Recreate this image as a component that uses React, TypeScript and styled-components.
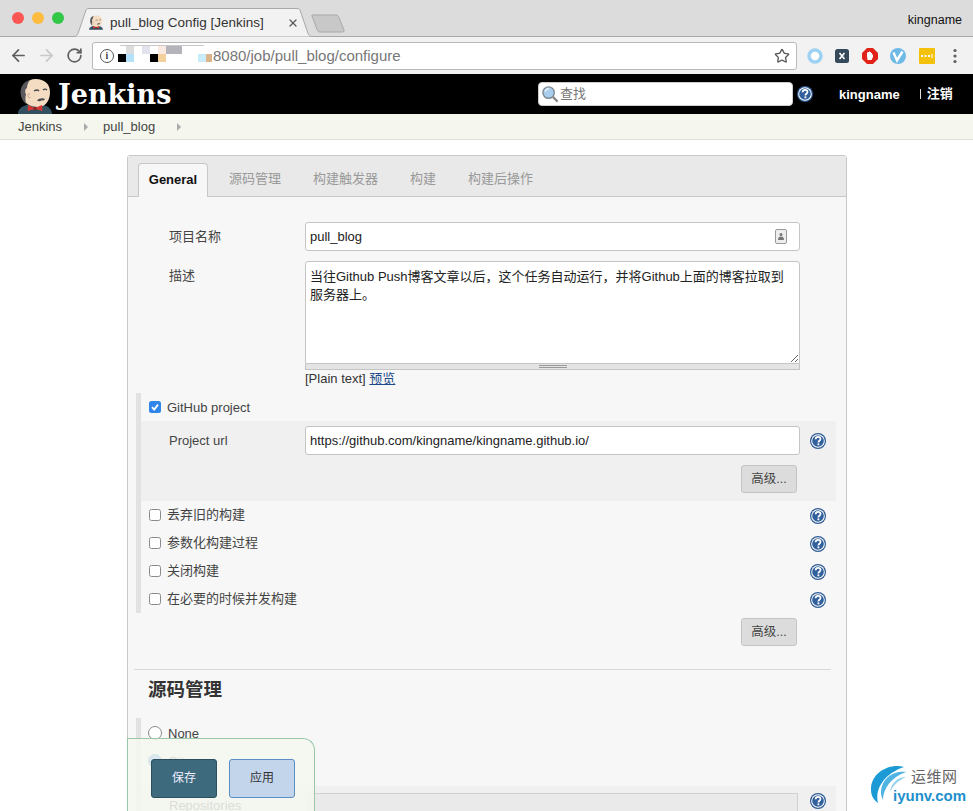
import React from "react";
import styled, { createGlobalStyle } from "styled-components";
import { ArrowLeft, ArrowRight, RotateCw, Star, X } from "lucide-react";

const FONT = `"Liberation Sans", "Noto Sans CJK SC", Arial, sans-serif`;

const GlobalStyle = createGlobalStyle`
  html, body {
    margin: 0;
    padding: 0;
    height: 100%;
    overflow: hidden;
    background: #fff;
  }
  * {
    box-sizing: border-box;
  }
`;

function JenkinsHead({ size }: { size: number }) {
  return (
    <svg width={size} height={size * (36 / 34)} viewBox="0 0 34 36">
      <path d="M0 36c0-5 4-8 10-9.500l7 2 7-2c6 1.500 10 4.500 10 9.500z" fill="#335061" />
      <path d="M4 19C2 9 8 1 18 1c8 0 14 5 14 13 0 9-5 15-12 15-8 0-14-4-16-10z" fill="#f3dcc2" />
      <path d="M8 26C3 22 1 14 4 8c1.500-3 4-5 8-6-2 3-3 5-3 8-2 1-2.500 4-1 6.500-1 3-.5 6 0 9.500z" fill="#5a585c" />
      <path d="M16 13c2-1.200 4-1.200 5 0M25 12c1-1 3-1 4 0" stroke="#49484b" strokeWidth="1.300" fill="none" />
      <path d="M19 22.500c2-2.500 6-3 8-1.500-1 1.500-2.500 2-3.500 1.200-1 1.300-3 1.300-4.500.3z" fill="#49484b" />
      <path d="M12 16c-1.500-1-2.500 0-2 2s1.500 2.500 2.500 1.500" stroke="#c9a888" strokeWidth="1" fill="none" />
      <path d="M10 27l7 3 7-3 .5 6-7.500-2-7.500 2z" fill="#d33833" />
      <circle cx="17" cy="30.500" r="1.500" fill="#8f1f1c" />
    </svg>
  );
}

function HelpIcon() {
  return (
    <svg width="16" height="16" viewBox="0 0 16 16">
      <circle cx="8" cy="8" r="8" fill="#2c5a94" />
      <circle cx="8" cy="8" r="6.800" fill="#fff" />
      <circle cx="8" cy="8" r="5.800" fill="#32609c" />
      <path
        d="M5.600 6.300C5.700 4.700 6.700 3.900 8.100 3.900c1.400 0 2.400.9 2.400 2.100 0 1.800-2.100 1.700-2.100 3.400"
        stroke="#fff"
        strokeWidth="1.700"
        fill="none"
      />
      <rect x="7.500" y="10.400" width="1.800" height="1.800" fill="#fff" />
    </svg>
  );
}

function UrlMosaic() {
  const blocks = [
    [4, 10, 8, 8, "#000"],
    [12, 10, 8, 8, "#b3e1f8"],
    [12, 2, 8, 8, "#dcdcdc"],
    [28, 2, 8, 8, "#e1e3ef"],
    [36, 10, 8, 8, "#000"],
    [44, 10, 8, 8, "#f3d09c"],
    [44, 2, 8, 8, "#faeae2"],
    [52, 2, 16, 8, "#b5b3ba"],
    [84, 10, 8, 8, "#c9ecfb"],
    [92, 10, 6, 8, "#dcb48c"],
  ] as const;
  return (
    <svg width="99" height="24" viewBox="0 0 99 24">
      <path d="M6 1h84v1H6z" fill="#c9c9c9" />
      {blocks.map(([x, y, w, h, c], i) => (
        <rect key={i} x={x} y={y} width={w} height={h} fill={c} />
      ))}
    </svg>
  );
}

function Extensions() {
  return (
    <ExtensionRow>
      <svg width="16" height="16" viewBox="0 0 16 16">
        <circle cx="8" cy="8" r="6" fill="#fff" stroke="#9fd2f2" strokeWidth="3.600" />
      </svg>
      <svg width="14" height="14" viewBox="0 0 14 14">
        <rect width="14" height="14" rx="2.500" fill="#34495a" />
        <path d="M4.500 4l5 6M9.500 4l-5 6" stroke="#fff" strokeWidth="1.600" />
      </svg>
      <svg width="16" height="16" viewBox="0 0 16 16">
        <path d="M5 0h6l5 5v6l-5 5H5l-5-5V5z" fill="#e2231a" />
        <path d="M5 8V4.500h1V4h1v-.5h1V4h1v1h1v2l1-1v3l-1.500 3h-4z" fill="#fff" />
      </svg>
      <svg width="16" height="16" viewBox="0 0 16 16">
        <circle cx="8" cy="8" r="8" fill="#6fb9e6" />
        <path d="M3.500 4.500l3.500 8 5.500-9" stroke="#fff" strokeWidth="2.400" fill="none" />
      </svg>
      <svg width="16" height="16" viewBox="0 0 16 16">
        <rect width="16" height="16" rx="1" fill="#f4c20d" />
        <path d="M2 8h2M5.500 8h2M9 8h2" stroke="#fff" strokeWidth="1.800" />
        <path d="M13 6v4" stroke="#fff" strokeWidth="1" />
      </svg>
      <svg width="16" height="16" viewBox="0 0 16 16">
        <circle cx="8" cy="2.500" r="1.600" fill="#5f5f5f" />
        <circle cx="8" cy="8" r="1.600" fill="#5f5f5f" />
        <circle cx="8" cy="13.500" r="1.600" fill="#5f5f5f" />
      </svg>
    </ExtensionRow>
  );
}

function Check({ checked, label }: { checked?: boolean; label: string }) {
  return (
    <CheckLabel>
      <CheckBox $checked={checked}>
        {checked && (
          <svg width="12" height="12" viewBox="0 0 12 12">
            <path d="M3 6.200l2.200 2.300L9 3.600" stroke="#fff" strokeWidth="1.800" fill="none" />
          </svg>
        )}
      </CheckBox>
      <CheckText $latin={checked}>{label}</CheckText>
    </CheckLabel>
  );
}

export default function App() {
  return (
    <Page>
      <GlobalStyle />
      <TabStrip>
        <Lights>
          <Light $color="#fc5753" />
          <Light $color="#fdbc40" />
          <Light $color="#33c748" />
        </Lights>
        <Tab>
          <TabShape width="242" height="29" viewBox="0 0 242 29">
            <path d="M0 28.500h2c2 0 3-1 4-3L14 2c.6-1 1.400-1.500 3-1.500h208c1.600 0 2.400.5 3 1.500l8 23.500c1 2 2 3 4 3h2" fill="#f2f2f2" stroke="#a8a8a8" />
          </TabShape>
          <TabIcon>
            <JenkinsHead size={14} />
          </TabIcon>
          <TabTitle>pull_blog Config [Jenkins]</TabTitle>
          <TabClose>
            <X size={12} strokeWidth={2.600} color="#5a5a5a" />
          </TabClose>
        </Tab>
        <NewTab width="34" height="19" viewBox="0 0 34 19">
          <path d="M1 1h24c1 0 2 .5 2.500 1.500L33 16c.4 1.500-.5 2-1.500 2H9c-1 0-2-.5-2.500-1.500L1 2c-.3-.6 0-1 0-1z" fill="#c8c8c8" stroke="#a8a8a8" />
        </NewTab>
        <ProfileName>kingname</ProfileName>
      </TabStrip>

      <Toolbar>
        <NavIcon>
          <ArrowLeft size={19} strokeWidth={2.200} color="#5f5f5f" />
        </NavIcon>
        <NavIcon>
          <ArrowRight size={19} strokeWidth={2.200} color="#c8c8c8" />
        </NavIcon>
        <NavIcon>
          <RotateCw size={17} strokeWidth={2.400} color="#5f5f5f" />
        </NavIcon>
        <Omnibox>
          <InfoBadge>i</InfoBadge>
          <UrlMosaic />
          <UrlText>8080/job/pull_blog/configure</UrlText>
          <StarSlot>
            <Star size={16} strokeWidth={2} color="#5a5a5a" />
          </StarSlot>
        </Omnibox>
        <Extensions />
      </Toolbar>

      <Header>
        <Brand>
          <JenkinsHead size={34} />
          <BrandName>Jenkins</BrandName>
        </Brand>
        <SearchBox>
          <svg width="19" height="19" viewBox="0 0 20 20">
            <circle cx="8" cy="8" r="6" fill="#a9cdec" stroke="#7c8a96" strokeWidth="1.500" />
            <path d="M4.500 7c.5-2 2-3 4-3" stroke="#e8f3fb" strokeWidth="1.500" fill="none" />
            <path d="M12.500 12.500l5 5" stroke="#8a8a8a" strokeWidth="2.500" />
          </svg>
          <SearchHint>查找</SearchHint>
        </SearchBox>
        <HeaderHelp>
          <HelpIcon />
        </HeaderHelp>
        <UserName>kingname</UserName>
        <Logout>注销</Logout>
      </Header>

      <Breadcrumbs>
        <Crumb>Jenkins</Crumb>
        <CrumbArrow />
        <Crumb>pull_blog</Crumb>
        <CrumbArrow />
      </Breadcrumbs>

      <Panel>
        <Tabs>
          <ActiveTab>General</ActiveTab>
          <ConfigTab>源码管理</ConfigTab>
          <ConfigTab>构建触发器</ConfigTab>
          <ConfigTab>构建</ConfigTab>
          <ConfigTab>构建后操作</ConfigTab>
        </Tabs>

        <NameRow>
          <CjkLabel>项目名称</CjkLabel>
          <InputWrap>
            <TextInput readOnly value="pull_blog" />
            <ContactBadge>
              <svg width="12" height="15" viewBox="0 0 12 15">
                <rect x=".5" y=".5" width="11" height="14" rx="1.500" fill="#eee" stroke="#999" />
                <circle cx="6" cy="5.500" r="1.500" fill="#777" />
                <path d="M3 11c0-2.500 1-3.500 3-3.500s3 1 3 3.500z" fill="#777" />
              </svg>
            </ContactBadge>
          </InputWrap>
        </NameRow>

        <DescRow>
          <DescLabel>描述</DescLabel>
          <div>
            <Description
              readOnly
              defaultValue="当往Github Push博客文章以后，这个任务自动运行，并将Github上面的博客拉取到服务器上。"
            />
            <Grippie>
              <GrippieLines />
            </Grippie>
            <PreviewLine>
              [Plain text] <PreviewLink href="#preview">预览</PreviewLink>
            </PreviewLine>
          </div>
        </DescRow>

        <OptionBlock>
          <OptionRow>
            <Check checked label="GitHub project" />
          </OptionRow>
          <NestedBlock>
            <UrlRow>
              <FieldLabel>Project url</FieldLabel>
              <TextInput readOnly value="https://github.com/kingname/kingname.github.io/" />
              <HelpSlot>
                <HelpIcon />
              </HelpSlot>
            </UrlRow>
            <ButtonRow>
              <AdvancedButton>高级...</AdvancedButton>
            </ButtonRow>
          </NestedBlock>
          {["丢弃旧的构建", "参数化构建过程", "关闭构建", "在必要的时候并发构建"].map((label) => (
            <OptionRow key={label}>
              <Check label={label} />
              <HelpSlot>
                <HelpIcon />
              </HelpSlot>
            </OptionRow>
          ))}
        </OptionBlock>

        <AdvancedRow>
          <AdvancedButton>高级...</AdvancedButton>
        </AdvancedRow>

        <Divider />
        <SectionTitle>源码管理</SectionTitle>

        <ScmBlock>
          <RadioRow>
            <Radio />
            None
          </RadioRow>
          <RadioRow>
            <Radio $selected />
            Git
          </RadioRow>
          <ScmNested>
            <RepoLabel>Repositories</RepoLabel>
            <RepoBox />
            <RepoHelp>
              <HelpIcon />
            </RepoHelp>
          </ScmNested>
        </ScmBlock>
      </Panel>

      <SaveBar>
        <SaveButton>保存</SaveButton>
        <ApplyButton>应用</ApplyButton>
      </SaveBar>

      <Watermark>
        <svg width="38" height="42" viewBox="0 0 38 42" fill="none">
          <path d="M34 3C20-1 2 8 1 24c-.4 7 2.500 12 7 15C5 28 11 11 34 3z" fill="#1c9ad6" />
          <path d="M36 8C24 6 12 14 11 27c-.3 3 .5 6 2 9 0-11 8-23 23-28z" fill="#4fb4e2" />
          <path d="M36 13c-8 0-15 6-16 15 3-7 9-12 16-15z" fill="#8fd0ee" />
        </svg>
        <WatermarkCn>运维网</WatermarkCn>
        <WatermarkEn>iyunv.com</WatermarkEn>
      </Watermark>
    </Page>
  );
}

const Page = styled.div`
  position: relative;
  width: 973px;
  height: 811px;
  overflow: hidden;
  font-family: ${FONT};
  font-size: 13px;
  color: #333;
  background: #fff;
`;

const TabStrip = styled.div`
  display: flex;
  align-items: flex-end;
  height: 37px;
  background: #dcdcdc;
  border-bottom: 1px solid #a8a8a8;
`;

const Lights = styled.div`
  display: flex;
  gap: 8px;
  align-self: flex-start;
  width: 72px;
  padding: 12px 0 0 12px;
`;

const Light = styled.span<{ $color: string }>`
  width: 12px;
  height: 12px;
  border-radius: 50%;
  background: ${(p) => p.$color};
`;

const Tab = styled.div`
  position: relative;
  display: flex;
  align-items: center;
  width: 242px;
  height: 29px;
  margin-bottom: -1px;
  padding-left: 17px;
`;

const TabShape = styled.svg`
  position: absolute;
  left: 0;
  top: 0;
`;

const TabIcon = styled.span`
  position: relative;
  display: flex;
  width: 21px;
`;

const TabTitle = styled.span`
  position: relative;
  font-size: 13.500px;
  color: #333;
  white-space: nowrap;
`;

const TabClose = styled.span`
  position: absolute;
  left: 215px;
  top: 9px;
  display: flex;
`;

const NewTab = styled.svg`
  margin: 0 0 3px -3px;
`;

const ProfileName = styled.span`
  margin-left: auto;
  align-self: center;
  padding: 4px 11px 0 0;
  font-size: 12.500px;
  color: #111;
`;

const Toolbar = styled.div`
  display: flex;
  align-items: center;
  height: 37px;
  padding: 0 0 0 4px;
  background: #f2f2f2;
`;

const NavIcon = styled.span`
  display: flex;
  justify-content: center;
  width: 28px;
`;

const Omnibox = styled.div`
  display: flex;
  align-items: center;
  width: 705px;
  height: 28px;
  margin-left: 4px;
  padding: 0 6px 0 7px;
  background: #fff;
  border: 1px solid #b9b9b9;
  border-radius: 3px;
`;

const InfoBadge = styled.span`
  flex: none;
  width: 14px;
  height: 14px;
  border: 1.500px solid #555;
  border-radius: 50%;
  font: bold 10px/11px "Liberation Serif", serif;
  text-align: center;
  color: #444;
`;

const UrlText = styled.span`
  font-size: 15px;
  color: #777;
  white-space: nowrap;
`;

const StarSlot = styled.span`
  display: flex;
  margin-left: auto;
`;

const ExtensionRow = styled.div`
  display: flex;
  align-items: center;
  justify-content: space-between;
  width: 176px;
  padding: 0 10px;
`;

const Header = styled.div`
  display: flex;
  align-items: center;
  height: 40px;
  background: #000;
`;

const Brand = styled.div`
  display: flex;
  align-items: flex-end;
  align-self: stretch;
  width: 538px;
  padding-left: 18px;
  overflow: hidden;
`;

const BrandName = styled.span`
  align-self: center;
  margin-left: 6px;
  font-family: "DejaVu Serif", Georgia, serif;
  font-size: 27px;
  font-weight: bold;
  color: #fff;
`;

const SearchBox = styled.div`
  display: flex;
  align-items: center;
  width: 255px;
  height: 24px;
  padding-left: 2px;
  background: #fff;
  border: 1px solid #ccc;
  border-radius: 4px;
`;

const SearchHint = styled.span`
  padding-bottom: 4px;
  color: #777;
`;

const HeaderHelp = styled.span`
  display: flex;
  margin-left: 4px;
`;

const UserName = styled.span`
  margin-left: 26px;
  font-weight: bold;
  color: #fff;
`;

const Logout = styled.span`
  margin-left: 20px;
  padding-left: 6px;
  border-left: 1px solid #ddd;
  line-height: 10px;
  font-weight: bold;
  color: #fff;
`;

const Breadcrumbs = styled.div`
  display: flex;
  align-items: center;
  height: 26px;
  padding-left: 18px;
  background: #f5f7ee;
  border-bottom: 1px solid #dcdcdc;
`;

const Crumb = styled.span`
  color: #444;
`;

const CrumbArrow = styled.span`
  width: 0;
  height: 0;
  margin: 0 15px 0 22px;
  border-left: 4px solid #aaa;
  border-top: 4px solid transparent;
  border-bottom: 4px solid transparent;
`;

const Panel = styled.div`
  width: 720px;
  height: 700px;
  margin: 15px 0 0 127px;
  background: #f7f7f7;
  border: 1px solid #c8c8c8;
  border-radius: 3px 3px 0 0;
`;

const Tabs = styled.div`
  display: flex;
  align-items: flex-end;
  height: 41px;
  padding-left: 10px;
  background: #e9e9e9;
  border-bottom: 1px solid #c8c8c8;
`;

const ActiveTab = styled.div`
  width: 70px;
  height: 34px;
  margin: 0 5px -1px 0;
  background: #f7f7f7;
  border: 1px solid #c8c8c8;
  border-bottom: none;
  border-radius: 4px 4px 0 0;
  font-weight: bold;
  line-height: 32px;
  text-align: center;
  color: #111;
`;

const ConfigTab = styled.div`
  align-self: center;
  padding: 3px 16px 0;
  color: #999;
`;

const NameRow = styled.div`
  display: grid;
  grid-template-columns: 136px 495px;
  align-items: center;
  margin: 25px 0 0 41px;
`;

const DescRow = styled.div`
  display: grid;
  grid-template-columns: 136px 495px;
  margin: 10px 0 0 41px;
`;

const FieldLabel = styled.span`
  color: #444;
`;

const CjkLabel = styled(FieldLabel)`
  padding-bottom: 2px;
`;

const DescLabel = styled(FieldLabel)`
  padding-top: 4px;
`;

const InputWrap = styled.div`
  position: relative;
`;

const TextInput = styled.input`
  display: block;
  width: 495px;
  height: 29px;
  padding: 0 4px;
  background: #fff;
  border: 1px solid #c4c4c4;
  border-radius: 3px;
  outline: none;
  font-family: ${FONT};
  font-size: 13px;
  color: #222;
`;

const ContactBadge = styled.span`
  position: absolute;
  right: 13px;
  top: 7px;
  display: flex;
`;

const Description = styled.textarea`
  display: block;
  width: 495px;
  height: 103px;
  padding: 6px 4px;
  background: #fff;
  border: 1px solid #c4c4c4;
  border-radius: 3px 3px 0 0;
  outline: none;
  font-family: ${FONT};
  font-size: 13px;
  line-height: 18px;
  color: #222;
`;

const Grippie = styled.div`
  display: flex;
  justify-content: center;
  width: 495px;
  height: 6px;
  padding-top: 1px;
  background: #e4e4e4;
  border: 1px solid #c4c4c4;
  border-top: none;
`;

const GrippieLines = styled.span`
  width: 28px;
  height: 3px;
  border-top: 1px solid #999;
  border-bottom: 1px solid #999;
`;

const PreviewLine = styled.div`
  height: 23px;
  padding-top: 1px;
  line-height: 16px;
  color: #333;
`;

const PreviewLink = styled.a`
  color: #204a87;
`;

const OptionBlock = styled.div`
  width: 700px;
  margin-left: 8px;
  border-left: 5px solid #e2e2e2;
`;

const OptionRow = styled.div`
  position: relative;
  display: flex;
  align-items: center;
  height: 28px;
  padding-left: 8px;
`;

const CheckLabel = styled.span`
  display: flex;
  align-items: center;
  gap: 6px;
  color: #444;
`;

const CheckText = styled.span<{ $latin?: boolean }>`
  padding-bottom: ${(p) => (p.$latin ? "0" : "3px")};
`;

const CheckBox = styled.span<{ $checked?: boolean }>`
  display: flex;
  width: 12px;
  height: 12px;
  background: ${(p) => (p.$checked ? "#2f86e8" : "#fff")};
  border: ${(p) => (p.$checked ? "none" : "1px solid #8a8a8a")};
  border-radius: 2.500px;
`;

const HelpSlot = styled.span`
  position: absolute;
  left: 669px;
  top: 7px;
  display: flex;
`;

const NestedBlock = styled.div`
  height: 80px;
  padding-top: 5px;
  background: #f0f0f0;
`;

const UrlRow = styled.div`
  position: relative;
  display: grid;
  grid-template-columns: 136px 495px;
  align-items: center;
  padding-left: 28px;
`;

const ButtonRow = styled.div`
  display: flex;
  justify-content: flex-end;
  margin-top: 10px;
  padding-right: 39px;
`;

const AdvancedRow = styled.div`
  display: flex;
  justify-content: flex-end;
  margin-top: 5px;
  padding-right: 49px;
`;

const AdvancedButton = styled.button`
  width: 56px;
  height: 28px;
  padding: 0 0 4px;
  background: #dcdcdc;
  border: 1px solid #c4c4c4;
  border-radius: 3px;
  font-family: ${FONT};
  font-size: 12.500px;
  color: #444;
`;

const Divider = styled.hr`
  width: 697px;
  height: 1px;
  margin: 23px 0 0 6px;
  background: #d8d8d8;
  border: none;
`;

const SectionTitle = styled.h3`
  height: 30px;
  margin: 9px 0 0 20px;
  font-size: 18.500px;
  font-weight: bold;
  line-height: 22px;
  color: #333;
`;

const ScmBlock = styled.div`
  width: 700px;
  margin: 9px 0 0 8px;
  padding-top: 1px;
  border-left: 5px solid #e2e2e2;
`;

const RadioRow = styled.div`
  display: flex;
  align-items: center;
  gap: 6px;
  height: 28px;
  padding-left: 7px;
  color: #444;
`;

const Radio = styled.span<{ $selected?: boolean }>`
  width: 14px;
  height: 14px;
  background: ${(p) => (p.$selected ? "#3f90e8" : "#fff")};
  border: 1px solid ${(p) => (p.$selected ? "#2f78c8" : "#8a8a8a")};
  border-radius: 50%;
`;

const ScmNested = styled.div`
  position: relative;
  display: grid;
  grid-template-columns: 136px 493px;
  height: 50px;
  margin-top: 11px;
  padding: 7px 0 0 28px;
  background: #f0f0f0;
`;

const RepoLabel = styled.span`
  padding-top: 5px;
  color: #444;
`;

const RepoBox = styled.div`
  background: #eaeaea;
  border: 1px solid #d0d0d0;
  border-left: 7px solid #e2e2e2;
`;

const RepoHelp = styled.span`
  position: absolute;
  left: 669px;
  top: 7px;
  display: flex;
`;

const SaveBar = styled.div`
  position: absolute;
  left: 127px;
  bottom: 0;
  display: flex;
  gap: 12px;
  width: 188px;
  height: 73px;
  padding: 20px 0 0 23px;
  background: rgba(245, 247, 240, 0.85);
  border: 1px solid #98c8a8;
  border-bottom: none;
  border-radius: 0 12px 0 0;
`;

const SaveButton = styled.button`
  width: 66px;
  height: 39px;
  padding: 0 0 4px;
  background: #3d6a7c;
  border: 1px solid #2c4f5e;
  border-radius: 3px;
  font-family: ${FONT};
  font-size: 12px;
  color: #eef;
`;

const ApplyButton = styled(SaveButton)`
  background: #c3d5eb;
  border-color: #5b8cc4;
  color: #333;
`;

const Watermark = styled.div`
  position: absolute;
  left: 870px;
  top: 764px;
  width: 100px;
  height: 44px;
  pointer-events: none;
  background: #fff;
`;

const WatermarkCn = styled.span`
  position: absolute;
  left: 41px;
  top: 3px;
  font-size: 15px;
  line-height: 20px;
  letter-spacing: 0.500px;
  color: #666;
`;

const WatermarkEn = styled.span`
  position: absolute;
  left: 23px;
  top: 23px;
  font-size: 15px;
  line-height: 18px;
  font-weight: bold;
  color: #1d8fcc;
`;
